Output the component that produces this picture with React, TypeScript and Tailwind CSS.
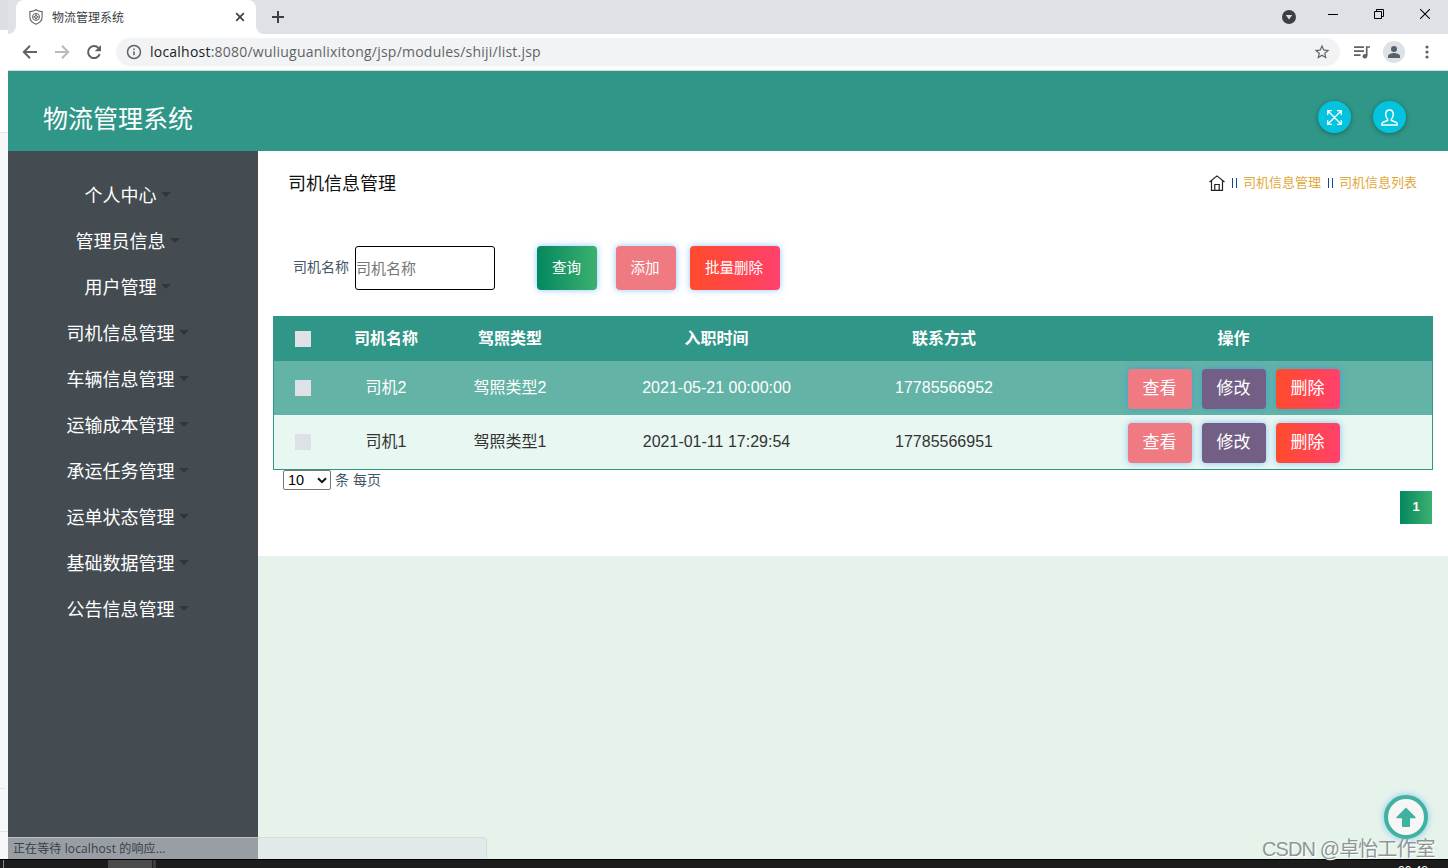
import React from "react";
import clsx from "clsx";

interface Driver {
  name: string;
  license: string;
  hired: string;
  phone: string;
}

const menus = [
  "个人中心",
  "管理员信息",
  "用户管理",
  "司机信息管理",
  "车辆信息管理",
  "运输成本管理",
  "承运任务管理",
  "运单状态管理",
  "基础数据管理",
  "公告信息管理",
];

const drivers: Driver[] = [
  { name: "司机2", license: "驾照类型2", hired: "2021-05-21 00:00:00", phone: "17785566952" },
  { name: "司机1", license: "驾照类型1", hired: "2021-01-11 17:29:54", phone: "17785566951" },
];

const columns = ["司机名称", "驾照类型", "入职时间", "联系方式", "操作"];

function TabStrip() {
  return (
    <div className="flex h-[34px] bg-[#dee1e6]">
      <div className="relative ml-2 flex h-[34px] w-[240px] items-center rounded-t-lg bg-white pl-[13px] pr-[11px]">
        <svg className="absolute -left-2 bottom-0" width="8" height="8" viewBox="0 0 8 8">
          <path d="M8 0v8H0a8 8 0 0 0 8-8z" fill="#fff" />
        </svg>
        <svg className="absolute -right-2 bottom-0" width="8" height="8" viewBox="0 0 8 8">
          <path d="M0 0v8h8a8 8 0 0 1-8-8z" fill="#fff" />
        </svg>
        <svg width="14" height="16" viewBox="0 0 14 16" fill="none" stroke="#5f6368">
          <path d="M7 .8C5.300 2.100 3.200 2.500.9 2.600v5.500c0 3.500 2.600 5.900 6.100 7.100 3.500-1.200 6.100-3.600 6.100-7.100V2.600C10.800 2.500 8.700 2.100 7 .8z" strokeWidth="1.100" />
          <circle cx="7" cy="7.900" r="3.500" strokeWidth="1" />
          <path d="M7 5.500v4.800M4.600 7.900h4.800" strokeWidth="1.800" />
          <circle cx="7" cy="7.900" r=".8" fill="#fff" stroke="none" />
        </svg>
        <span className="ml-[9px] mt-px flex-1 text-xs leading-4 text-[#3c4043]">物流管理系统</span>
        <svg width="10" height="10" viewBox="0 0 10 10" stroke="#3c4043" strokeWidth="1.700">
          <path d="M1.200 1.200l7.600 7.600M8.800 1.200L1.200 8.800" />
        </svg>
      </div>
      <svg className="ml-4 mt-[11px]" width="12" height="12" viewBox="0 0 12 12" stroke="#3c4043" strokeWidth="2">
        <path d="M6 0v12M0 6h12" />
      </svg>
      <div className="ml-auto flex pr-[18px] text-black">
        <svg className="mt-[10px]" width="14" height="14" viewBox="0 0 14 14">
          <circle cx="7" cy="7" r="7" fill="#3c4043" />
          <path d="M3.800 5h6.400L7 9.600z" fill="#dee1e6" />
        </svg>
        <svg className="ml-8 mt-[9px]" width="10" height="11" viewBox="0 0 10 11">
          <path d="M0 5.500h10" stroke="#000" />
        </svg>
        <svg className="ml-9 mt-[9px]" width="10" height="10" viewBox="0 0 10 10" fill="none" stroke="#000">
          <path d="M.5 2.500h7v7h-7zM2.500 2.500v-2h7v7h-2" />
        </svg>
        <svg className="ml-9 mt-[9px]" width="10" height="10" viewBox="0 0 10 10" stroke="#000" strokeWidth="1.100">
          <path d="M0 0l10 10M10 0L0 10" />
        </svg>
      </div>
    </div>
  );
}

function Toolbar() {
  return (
    <div className="flex h-9 items-center bg-white pl-[14px] pr-[10px]">
      <svg width="16" height="16" viewBox="0 0 16 16" fill="none" stroke="#5f6368" strokeWidth="2">
        <path d="M15 8H2.500M8 1.800L1.800 8 8 14.200" />
      </svg>
      <svg className="ml-4" width="16" height="16" viewBox="0 0 16 16" fill="none" stroke="#b8babd" strokeWidth="2">
        <path d="M1 8h12.500M8 1.800L14.200 8 8 14.200" />
      </svg>
      <svg className="ml-4" width="16" height="16" viewBox="0 0 16 16">
        <path d="M13.700 10.200A6 6 0 1 1 12.500 4" fill="none" stroke="#5f6368" strokeWidth="2" />
        <path d="M15 1v6.300H8.700z" fill="#5f6368" />
      </svg>
      <div className="ml-[14px] flex h-7 flex-1 items-center rounded-full bg-[#f1f3f4] pl-[10px] pr-[9px]">
        <svg width="16" height="16" viewBox="0 0 16 16" fill="none" stroke="#5f6368" strokeWidth="1.500">
          <circle cx="8" cy="8" r="6.500" />
          <path d="M8 7.200v4M8 4.500v1.500" />
        </svg>
        <span className="ml-2 flex-1 whitespace-nowrap font-['Open_Sans'] text-sm leading-5 tracking-[0.225px] text-[#5f6368]">
          <span className="text-[#202124]">localhost</span>:8080/wuliuguanlixitong/jsp/modules/shiji/list.jsp
        </span>
        <svg width="18" height="18" viewBox="0 0 24 24" fill="#5f6368">
          <path d="M22 9.240l-7.190-.62L12 2 9.190 8.630 2 9.240l5.460 4.730L5.820 21 12 17.270 18.180 21l-1.630-7.030zM12 15.400l-3.760 2.270 1-4.280-3.320-2.880 4.380-.38L12 6.100l1.710 4.040 4.380.38-3.320 2.880 1 4.280z" />
        </svg>
      </div>
      <svg className="ml-[14px]" width="16" height="13" viewBox="0 0 16 13" fill="none" stroke="#5f6368" strokeWidth="1.700">
        <path d="M0 1.200h10M0 5.200h10M0 9.200h6.500M12.700 10V1h3.300" />
        <circle cx="10.900" cy="10.200" r="2.300" fill="#5f6368" stroke="none" />
      </svg>
      <span className="ml-[13px] flex size-[22px] items-center justify-center rounded-full bg-[#dee1e6]">
        <svg width="12" height="12" viewBox="0 0 12 12" fill="#56606f">
          <circle cx="6" cy="3" r="3" />
          <path d="M0 12V10c0-2 4-3 6-3s6 1 6 3v2z" />
        </svg>
      </span>
      <svg className="ml-[20px]" width="4" height="14" viewBox="0 0 4 14" fill="#5f6368">
        <circle cx="2" cy="2" r="1.600" />
        <circle cx="2" cy="7" r="1.600" />
        <circle cx="2" cy="12" r="1.600" />
      </svg>
      <span className="w-[9px]" />
    </div>
  );
}

function Header() {
  return (
    <header className="flex h-20 bg-[#309688] pl-[35px] pr-[42px]">
      <h1 className="mt-[30px] text-[25px] leading-9 text-white">物流管理系统</h1>
      <div className="ml-auto mt-[30px] flex gap-[22px]">
        <button className="flex h-8 w-[33px] items-center justify-center rounded-full bg-[#03c3de] shadow-[0_1px_5px_rgba(0,0,0,0.35)]">
          <svg width="15" height="15" viewBox="0 0 15 15" fill="none" stroke="#fff" strokeWidth="1.300">
            <path d="M1 1l13 13M14 1L1 14M.7 5V.7H5M10 .7h4.300V5M14.300 10v4.300H10M5 14.300H.7V10" />
          </svg>
        </button>
        <button className="flex h-8 w-[33px] items-center justify-center rounded-full bg-[#03c3de] shadow-[0_1px_5px_rgba(0,0,0,0.35)]">
          <svg width="17" height="17" viewBox="0 0 17 17" fill="none" stroke="#fff" strokeWidth="1.500">
            <path d="M6.600 10.200C5.300 9 4.700 7.300 4.700 5.300 4.700 2.500 6.200.9 8.500.9s3.800 1.600 3.800 4.400c0 2-.6 3.700-1.900 4.900v1.200l4.600 1.800c.8.400 1.200 1.200 1.200 2.700H.8c0-1.500.4-2.300 1.200-2.700l4.600-1.800z" />
          </svg>
        </button>
      </div>
    </header>
  );
}

function Sidebar() {
  return (
    <aside className="w-[250px] shrink-0 bg-[#444c52] pr-[11px] pt-[21px]">
      {menus.map((menu) => (
        <div key={menu} className="flex h-[46px] items-center justify-center">
          <span className="mt-[2px] text-lg leading-6 text-white">{menu}</span>
          <span className="mb-px ml-1 border-x-[5px] border-t-[5px] border-x-transparent border-t-[#2f3739]" />
        </div>
      ))}
    </aside>
  );
}

interface ActionButtonProps {
  className: string;
  children: React.ReactNode;
}

function ActionButton({ className, children }: ActionButtonProps) {
  return (
    <button className={clsx("rounded-[4px] text-white shadow-[0_0_6px_rgba(30,144,255,0.5)]", className)}>
      {children}
    </button>
  );
}

function SearchBar() {
  return (
    <div className="mt-[51px] flex h-11 items-center pl-5 text-sm">
      <label className="-mt-[3px] leading-5 text-[#455566]">司机名称</label>
      <input
        className="ml-[6px] h-11 w-[140px] rounded-[3px] border border-black bg-white py-px text-[15px] text-[#212529] placeholder:text-[#757575]"
        placeholder="司机名称"
      />
      <ActionButton className="ml-[42px] h-11 w-[60px] bg-linear-[90deg,#04885f,#3db06f] pr-px text-[14.500px]">查询</ActionButton>
      <ActionButton className="ml-[19px] h-11 w-[60px] bg-[#f07a82] pr-[2px] text-[14.500px]">添加</ActionButton>
      <ActionButton className="ml-[14px] h-11 w-[90px] bg-linear-[90deg,#ff4b2b,#ff416c] pr-[2px] text-[14.500px]">批量删除</ActionButton>
    </div>
  );
}

function DriverTable() {
  return (
    <table className="mt-[26px] w-[1160px] table-fixed border-separate border-spacing-0 border border-[#309688] text-center text-base">
      <colgroup>
        <col className="w-[58px]" />
        <col className="w-[108px]" />
        <col className="w-[140px]" />
        <col className="w-[273px]" />
        <col className="w-[182px]" />
        <col />
      </colgroup>
      <thead>
        <tr className="h-11 bg-[#309688] text-white">
          <th className="p-0">
            <span className="mx-auto block size-4 bg-[#dee1e6]" />
          </th>
          {columns.map((column) => (
            <th key={column} className="p-0 font-bold leading-6">{column}</th>
          ))}
        </tr>
      </thead>
      <tbody>
        {drivers.map((driver, index) => (
          <tr
            key={driver.phone}
            className={clsx("h-[54px]", index === 0 ? "bg-[#63b3a6] text-white" : "bg-[#e8f7f1] text-[#333]")}
          >
            <td className="p-0">
              <span className="mx-auto block size-4 bg-[#dee1e6]" />
            </td>
            <td className="p-0 pb-px">{driver.name}</td>
            <td className="p-0 pb-px">{driver.license}</td>
            <td className="p-0 pb-px">{driver.hired}</td>
            <td className="p-0 pb-px">{driver.phone}</td>
            <td className="p-0">
              <div className="flex justify-center gap-[10px] pt-[2px] text-[17px]">
                <ActionButton className="h-10 w-16 bg-[#f07a82]">查看</ActionButton>
                <ActionButton className="h-10 w-16 bg-[#735f85]">修改</ActionButton>
                <ActionButton className="h-10 w-16 bg-linear-[90deg,#ff4b2b,#ff416c]">删除</ActionButton>
              </div>
            </td>
          </tr>
        ))}
      </tbody>
    </table>
  );
}

function Pager() {
  return (
    <div className="flex pr-px">
      <div className="ml-[10px] flex h-5 items-center text-sm text-[#455566]">
        <span className="flex h-5 w-12 items-center justify-between rounded-[2px] border border-[#767676] bg-white pl-1 pr-[3px] text-[14.500px] text-black">
          10
          <svg width="10" height="7" viewBox="0 0 10 7" fill="none" stroke="#111" strokeWidth="2">
            <path d="M1 1.200l4 4 4-4" />
          </svg>
        </span>
        <span className="ml-1">条 每页</span>
      </div>
      <span className="ml-auto mt-[21px] flex h-[33px] w-8 items-center justify-center bg-linear-[90deg,#04885f,#3db06f] pb-px text-[13px] font-bold text-white">
        1
      </span>
    </div>
  );
}

function Breadcrumb() {
  return (
    <div className="mb-[2px] flex items-center text-[13px] leading-5 text-[#e0a93b]">
      <svg className="mb-px" width="16" height="16" viewBox="0 0 16 16" fill="none" stroke="#222" strokeWidth="1.200">
        <path d="M.5 7L8 .9 15.500 7M2.500 5.600v9.700h11V5.600M5.800 15.300V9.500h4.400v5.800" />
      </svg>
      <span className="ml-[7px] h-[10px] w-[5px] border-x border-[#104a80]" />
      <span className="ml-[6px]">司机信息管理</span>
      <span className="ml-[7px] h-[10px] w-[5px] border-x border-[#104a80]" />
      <span className="ml-[6px]">司机信息列表</span>
    </div>
  );
}

export default function App() {
  return (
    <div className="relative flex h-[868px] w-[1448px] flex-col overflow-hidden bg-[#1c1c1c] font-['Liberation_Sans','Noto_Sans_CJK_SC',sans-serif]">
      <div className="flex h-[859px]">
        {/* edge of the window behind */}
        <div className="flex w-2 shrink-0 flex-col bg-[#f5f7f9]">
          <div className="h-[30px] bg-[#dcdee2]" />
          <div className="h-[103px] border-b border-[#e5e7e9] bg-white" />
          <div className="mt-[655px] h-[43px] w-[5px] border-t border-[#e1e3e6]" />
          <div className="h-px bg-[#e1e3e6]" />
        </div>
        <div className="flex flex-1 flex-col">
          <TabStrip />
          <Toolbar />
          <div className="h-px bg-[#d9dcdf]" />
          <Header />
          <div className="flex flex-1">
            <Sidebar />
            <main className="flex-1 bg-[#e5f3eb]">
              <section className="h-[405px] bg-white px-[15px]">
                <div className="flex h-11 items-end justify-between pl-[15px] pr-4">
                  <h2 className="-mb-px text-lg leading-[24px] text-[#111]">司机信息管理</h2>
                  <Breadcrumb />
                </div>
                <SearchBar />
                <DriverTable />
                <Pager />
              </section>
            </main>
          </div>
        </div>
      </div>

      {/* taskbar */}
      <div className="flex h-[9px] overflow-hidden border-t border-black">
        <span className="ml-[3px] w-px bg-[#888]" />
        <span className="ml-[104px] w-11 bg-[#4b4b4b]" />
        <span className="w-1 border-l border-[#222] bg-[#3c3c3c]" />
        <span className="ml-auto mr-5 mt-[4px] text-xs leading-[14px] text-white">20:48</span>
      </div>

      <div className="absolute left-2 top-[837px] flex h-[22px] w-[479px] items-center rounded-tr border-r border-t border-[#ced8d5]/60 bg-[#dee1e6]/55 pl-[5px] font-['Open_Sans','Noto_Sans_CJK_SC',sans-serif] text-xs tracking-[0.120px] text-[#3c4043]">
        正在等待 localhost 的响应...
      </div>

      <button className="absolute left-[1384px] top-[795px] flex size-11 items-center justify-center rounded-full border-4 border-[#3fb39d] bg-[#f6f6f6] shadow-[0_0_6px_rgba(30,144,255,0.5)]">
        <svg width="20" height="20" viewBox="0 0 20 20" fill="#3fb39d">
          <path d="M10 .5L19.500 10v1.200H14V19q0 1-1 1H7q-1 0-1-1v-7.800H.5V10z" />
        </svg>
      </button>
      <div className="absolute left-[1262px] top-[834px] whitespace-nowrap text-[20px] leading-[30px] tracking-[-0.900px] text-[#8e9794] [text-shadow:1px_1px_0_#fff]">
        CSDN @卓怡工作室
      </div>
    </div>
  );
}
